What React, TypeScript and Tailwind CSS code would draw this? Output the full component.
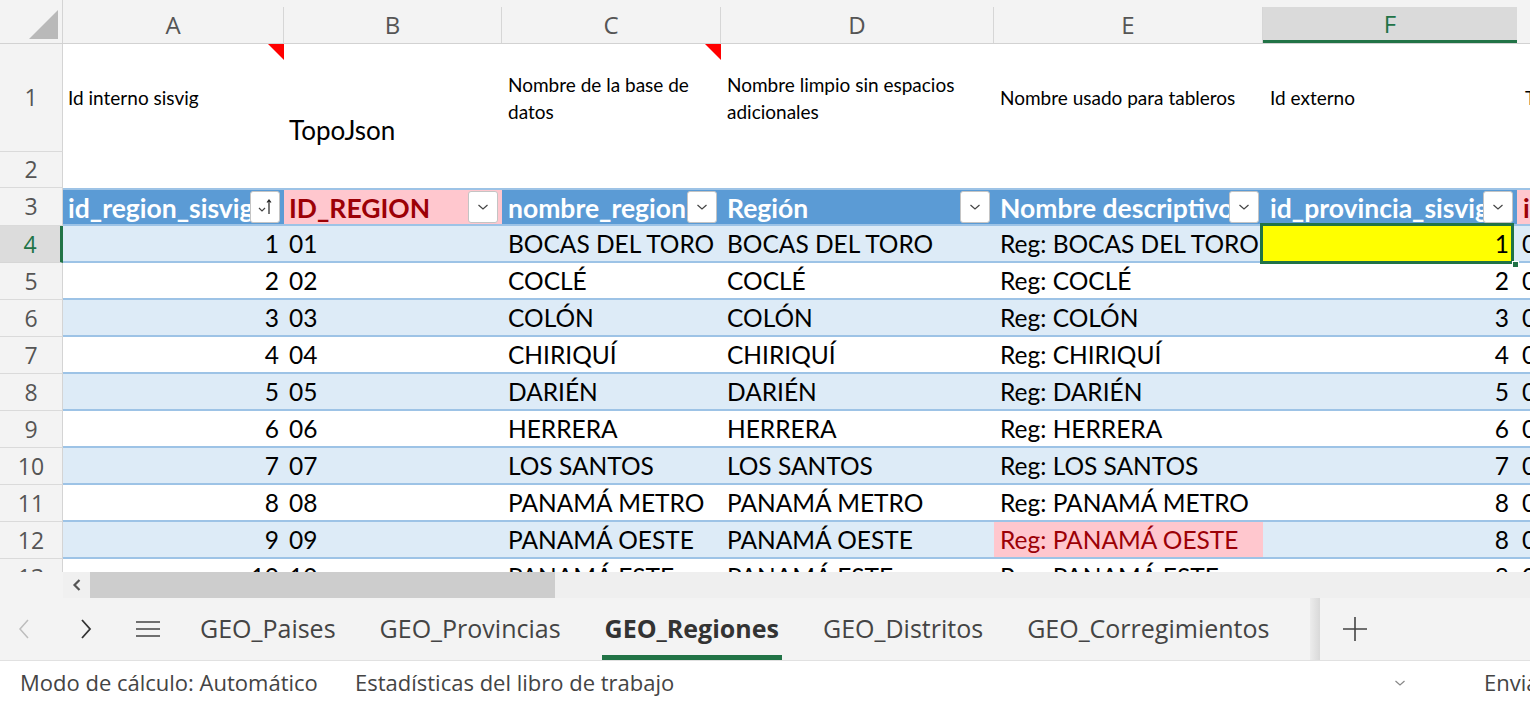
import React from 'react';

const rows = [
  ['1', '01', 'BOCAS DEL TORO', 'BOCAS DEL TORO', 'Reg: BOCAS DEL TORO', '1', '0'],
  ['2', '02', 'COCLÉ', 'COCLÉ', 'Reg: COCLÉ', '2', '0'],
  ['3', '03', 'COLÓN', 'COLÓN', 'Reg: COLÓN', '3', '0'],
  ['4', '04', 'CHIRIQUÍ', 'CHIRIQUÍ', 'Reg: CHIRIQUÍ', '4', '0'],
  ['5', '05', 'DARIÉN', 'DARIÉN', 'Reg: DARIÉN', '5', '0'],
  ['6', '06', 'HERRERA', 'HERRERA', 'Reg: HERRERA', '6', '0'],
  ['7', '07', 'LOS SANTOS', 'LOS SANTOS', 'Reg: LOS SANTOS', '7', '0'],
  ['8', '08', 'PANAMÁ METRO', 'PANAMÁ METRO', 'Reg: PANAMÁ METRO', '8', '0'],
  ['9', '09', 'PANAMÁ OESTE', 'PANAMÁ OESTE', 'Reg: PANAMÁ OESTE', '8', '0'],
  ['10', '10', 'PANAMÁ ESTE', 'PANAMÁ ESTE', 'Reg: PANAMÁ ESTE', '8', '0'],
];

const colW = ['w-[221px]', 'w-[218px]', 'w-[219px]', 'w-[273px]', 'w-[269px]', 'w-[254px]'];
const letters = ['A', 'B', 'C', 'D', 'E', 'F'];
const tabs = ['GEO_Paises', 'GEO_Provincias', 'GEO_Regiones', 'GEO_Distritos', 'GEO_Corregimientos'];

function Chevron({ color = '#444' }: { color?: string }) {
  return (
    <svg width="12" height="8" viewBox="0 0 12 8">
      <path d="M1.5 2 L6 6 L10.5 2" fill="none" stroke={color} strokeWidth="1.2" />
    </svg>
  );
}

function FilterButton({ sorted }: { sorted?: boolean }) {
  return (
    <div className="absolute right-[4px] top-[1px] w-[30px] h-[32px] bg-white border border-[#c4c4c4] rounded-[3px] flex items-center justify-center">
      {sorted ? (
        <svg width="18" height="20" viewBox="0 0 18 20">
          <path d="M3 11 L6 14 L9 11" fill="none" stroke="#444" strokeWidth="1.2" />
          <path d="M13 17 V3 M11 5.5 L13 3 L15 5.5" fill="none" stroke="#222" strokeWidth="1.2" />
        </svg>
      ) : (
        <Chevron />
      )}
    </div>
  );
}

function RedMark() {
  return (
    <svg className="absolute right-0 top-0" width="16" height="16" viewBox="0 0 16 16">
      <polygon points="0,0 16,0 16,16" fill="#ff0000" />
    </svg>
  );
}

function RowHead({ n, active }: { n: string; active?: boolean }) {
  return (
    <div
      className={
        active
          ? 'w-[63px] shrink-0 h-full flex items-center justify-center bg-[#dcdcdc] border-b border-[#d6d6d6] border-r-[3px] border-r-[#217346] text-[#217346]'
          : 'w-[63px] shrink-0 h-full flex items-center justify-center bg-[#f3f3f3] border-b border-[#dadada] border-r border-r-[#d4d4d4] text-[#555]'
      }
    >
      <span className="text-[23px] font-['Open_Sans',sans-serif]">{n}</span>
    </div>
  );
}

export default function App() {
  return (
    <div className="w-[1530px] h-[704px] overflow-hidden flex flex-col bg-white font-['Lato','Liberation_Sans',sans-serif] text-black">
      {/* Grid */}
      <div className="h-[572px] overflow-hidden flex flex-col shrink-0">
        {/* Column letters */}
        <div className="flex h-[44px] shrink-0 bg-[#f3f3f3] border-b border-[#d2d2d2]">
          <div className="w-[63px] shrink-0 relative border-r border-[#d4d4d4]">
            <svg className="absolute left-[29px] top-[10px]" width="30" height="29" viewBox="0 0 30 29">
              <polygon points="29,0 29,29 0,29" fill="#b9b9b9" />
            </svg>
          </div>
          {letters.map((l, idx) =>
            l === 'F' ? (
              <div key={l} className={`${colW[idx]} shrink-0 pt-[7px] flex`}>
                <div className="flex-1 bg-[#dadada] border-b-[3px] border-[#217346] flex items-center justify-center text-[#217346] text-[24px] font-['Open_Sans',sans-serif]">
                  {l}
                </div>
              </div>
            ) : (
              <div key={l} className={`${colW[idx]} shrink-0 pt-[7px] flex`}>
                <div className="flex-1 border-r border-[#d6d6d6] flex items-center justify-center text-[#555] text-[24px] font-['Open_Sans',sans-serif]">
                  {l}
                </div>
              </div>
            ),
          )}
          <div className="flex-1" />
        </div>

        {/* Row 1 */}
        <div className="flex h-[108px] shrink-0">
          <RowHead n="1" />
          <div className={`${colW[0]} shrink-0 relative flex items-center pl-[5px] text-[19px]`}>
            Id interno sisvig
            <RedMark />
          </div>
          <div className={`${colW[1]} shrink-0 flex items-end pl-[5px] pb-[2px] text-[26px]`}>TopoJson</div>
          <div className={`${colW[2]} shrink-0 relative flex items-center pl-[6px] pr-[20px] text-[19px] leading-[27px]`}>
            Nombre de la base de datos
            <RedMark />
          </div>
          <div className={`${colW[3]} shrink-0 flex items-center pl-[6px] pr-[20px] text-[19px] leading-[27px]`}>
            Nombre limpio sin espacios adicionales
          </div>
          <div className={`${colW[4]} shrink-0 flex items-center pl-[6px] text-[19px] whitespace-nowrap`}>
            Nombre usado para tableros
          </div>
          <div className={`${colW[5]} shrink-0 flex items-center pl-[7px] text-[19px]`}>Id externo</div>
          <div className="flex-1 flex items-center pl-[8px] text-[19px] overflow-hidden whitespace-nowrap">Tipo</div>
        </div>

        {/* Row 2 */}
        <div className="flex h-[36px] shrink-0">
          <RowHead n="2" />
          <div className="flex-1" />
        </div>

        {/* Row 3 - table header */}
        <div className="flex h-[38px] shrink-0">
          <RowHead n="3" />
          <div className="flex-1 flex border-y-2 border-[#9dc3e6] font-bold text-[26.5px] text-white">
            <div className={`${colW[0]} shrink-0 relative bg-[#5b9bd5] pl-[5px] pt-[3px] flex items-center overflow-hidden whitespace-nowrap`}>
              id_region_sisvig
              <FilterButton sorted />
            </div>
            <div className={`${colW[1]} shrink-0 relative bg-[#ffc7ce] text-[#9c0006] pl-[5px] pt-[3px] flex items-center overflow-hidden whitespace-nowrap`}>
              ID_REGION
              <FilterButton />
            </div>
            <div className={`${colW[2]} shrink-0 relative bg-[#5b9bd5] pl-[6px] pt-[3px] flex items-center overflow-hidden whitespace-nowrap`}>
              nombre_region
              <FilterButton />
            </div>
            <div className={`${colW[3]} shrink-0 relative bg-[#5b9bd5] pl-[6px] pt-[3px] flex items-center overflow-hidden whitespace-nowrap`}>
              Región
              <FilterButton />
            </div>
            <div className={`${colW[4]} shrink-0 relative bg-[#5b9bd5] pl-[6px] pt-[3px] flex items-center overflow-hidden whitespace-nowrap`}>
              Nombre descriptivo
              <FilterButton />
            </div>
            <div className={`${colW[5]} shrink-0 relative bg-[#5b9bd5] pl-[7px] pt-[3px] flex items-center overflow-hidden whitespace-nowrap`}>
              id_provincia_sisvig
              <FilterButton />
            </div>
            <div className="flex-1 bg-[#ffc7ce] text-[#9c0006] pl-[6px] pt-[3px] flex items-center overflow-hidden whitespace-nowrap">id_provincia</div>
          </div>
        </div>

        {/* Data rows */}
        {rows.map((r, i) => {
          const band = i % 2 === 0;
          const bg = band ? 'bg-[#ddebf7]' : 'bg-white';
          return (
            <div key={i} className="flex h-[37px] shrink-0">
              <RowHead n={String(i + 4)} active={i === 0} />
              <div className={`flex-1 flex border-b-2 border-[#9dc3e6] text-[24.5px] pt-[2px] ${bg}`}>
                <div className={`${colW[0]} shrink-0 flex items-center justify-end pr-[5px]`}>{r[0]}</div>
                <div className={`${colW[1]} shrink-0 flex items-center pl-[5px]`}>{r[1]}</div>
                <div className={`${colW[2]} shrink-0 flex items-center pl-[6px] whitespace-nowrap`}>{r[2]}</div>
                <div className={`${colW[3]} shrink-0 flex items-center pl-[6px] whitespace-nowrap`}>{r[3]}</div>
                {i === 8 ? (
                  <div className={`${colW[4]} shrink-0 flex items-center pl-[6px] whitespace-nowrap bg-[#ffc7ce] text-[#9c0006] -mt-[2px] pt-[2px]`}>
                    {r[4]}
                  </div>
                ) : (
                  <div className={`${colW[4]} shrink-0 flex items-center pl-[6px] whitespace-nowrap`}>{r[4]}</div>
                )}
                {i === 0 ? (
                  <div className={`${colW[5]} shrink-0 relative`}>
                    <div className="absolute left-[-3px] right-[3px] top-[-5px] bottom-[-3px] bg-[#ffff00] border-[3px] border-[#217346] flex items-center justify-end pr-[2px] pt-[2px]">
                      {r[5]}
                    </div>
                    <div className="absolute right-[-2px] bottom-[-7px] w-[7px] h-[7px] bg-[#217346] border border-white" />
                  </div>
                ) : (
                  <div className={`${colW[5]} shrink-0 flex items-center justify-end pr-[8px]`}>{r[5]}</div>
                )}
                <div className="flex-1 flex items-center pl-[5px] overflow-hidden whitespace-nowrap">{r[6]}1</div>
              </div>
            </div>
          );
        })}
      </div>

      {/* Horizontal scrollbar */}
      <div className="h-[26px] shrink-0 flex bg-[#efefef]">
        <div className="w-[63px] shrink-0 bg-[#f3f3f3]" />
        <div className="w-[27px] shrink-0 flex items-center justify-center bg-[#f0f0f0]">
          <svg width="10" height="14" viewBox="0 0 10 14">
            <path d="M7.5 2 L2.5 7 L7.5 12" fill="none" stroke="#555" strokeWidth="2.2" />
          </svg>
        </div>
        <div className="w-[465px] shrink-0 bg-[#cdcdcd]" />
        <div className="flex-1" />
      </div>

      {/* Sheet tabs */}
      <div className="h-[63px] shrink-0 flex items-stretch bg-[#f3f3f3] border-b border-[#e1e1e1] font-['Open_Sans',sans-serif] text-[25px] text-[#444] whitespace-nowrap">
        <div className="w-[48px] shrink-0 flex items-center justify-center">
          <svg width="14" height="22" viewBox="0 0 14 22">
            <path d="M11 2 L3 11 L11 20" fill="none" stroke="#bdbdbd" strokeWidth="1.5" />
          </svg>
        </div>
        <div className="w-[76px] shrink-0 flex items-center justify-center">
          <svg width="14" height="22" viewBox="0 0 14 22">
            <path d="M3 2 L11 11 L3 20" fill="none" stroke="#333" strokeWidth="1.8" />
          </svg>
        </div>
        <div className="w-[48px] shrink-0 flex items-center justify-center">
          <svg width="24" height="16" viewBox="0 0 24 16">
            <path d="M0 1 H24 M0 8 H24 M0 15 H24" stroke="#444" strokeWidth="1.6" />
          </svg>
        </div>
        <div className="w-[6px] shrink-0" />
        {tabs.map((t) =>
          t === 'GEO_Regiones' ? (
            <div key={t} className="mx-[19px] px-[3px] flex items-center font-bold text-[#333] border-y-[5px] border-t-transparent border-b-[#217346]">
              {t}
            </div>
          ) : (
            <div key={t} className="mx-[19px] px-[3px] flex items-center">
              {t}
            </div>
          ),
        )}
        <div className="w-[19px] shrink-0" />
        <div className="w-[10px] shrink-0 bg-gradient-to-r from-[#ececec] to-[#d9d9d9]" />
        <div className="w-[70px] shrink-0 flex items-center justify-center">
          <svg width="26" height="26" viewBox="0 0 26 26">
            <path d="M13 1 V25 M1 13 H25" stroke="#444" strokeWidth="1.6" />
          </svg>
        </div>
        <div className="flex-1" />
      </div>

      {/* Status bar */}
      <div className="flex-1 flex items-center font-['Open_Sans',sans-serif] text-[22px] text-[#444] whitespace-nowrap">
        <div className="pl-[20px] w-[355px] shrink-0">Modo de cálculo: Automático</div>
        <div className="shrink-0">Estadísticas del libro de trabajo</div>
        <div className="flex-1" />
        <div className="w-[12px] shrink-0 flex items-center">
          <Chevron color="#888" />
        </div>
        <div className="ml-[78px] w-[46px] shrink-0 overflow-hidden">Enviar comentarios</div>
      </div>
    </div>
  );
}
